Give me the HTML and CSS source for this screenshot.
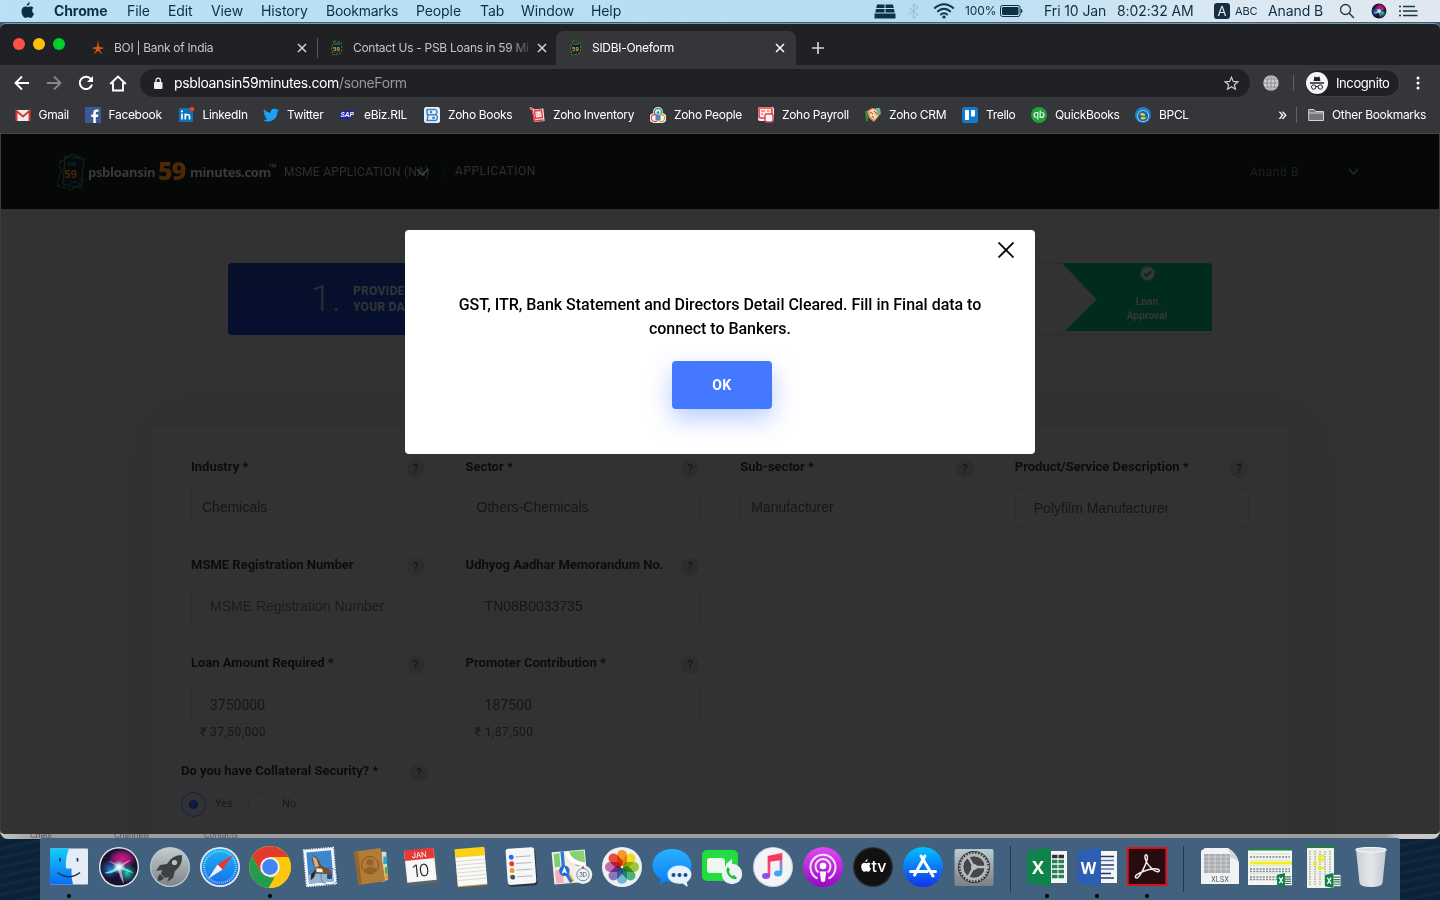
FILE: index.html
```html
<!DOCTYPE html>
<html lang="en">
<head>
<meta charset="utf-8">
<title>SIDBI-Oneform</title>
<link rel="stylesheet" href="styles.css">
</head>
<body>
<svg class="defs" width="0" height="0">
  <defs>
    <linearGradient id="gFinder" x1="0" y1="0" x2="0" y2="1"><stop offset="0" stop-color="#13cdf8"/><stop offset="1" stop-color="#0a6cf5"/></linearGradient>
    <linearGradient id="gSilver" x1="0" y1="0" x2="0" y2="1"><stop offset="0" stop-color="#c3cdd0"/><stop offset="1" stop-color="#7c8488"/></linearGradient>
    <linearGradient id="gSafari" x1="0" y1="0" x2="0" y2="1"><stop offset="0" stop-color="#19b2f5"/><stop offset="1" stop-color="#1b6fe6"/></linearGradient>
    <linearGradient id="gMsg" x1="0" y1="0" x2="0" y2="1"><stop offset="0" stop-color="#29b2fd"/><stop offset="1" stop-color="#0a7cf8"/></linearGradient>
    <linearGradient id="gPod" x1="0" y1="0" x2="0" y2="1"><stop offset="0" stop-color="#de4bf4"/><stop offset="1" stop-color="#9a06c4"/></linearGradient>
    <linearGradient id="gStore" x1="0" y1="0" x2="0" y2="1"><stop offset="0" stop-color="#02c2ff"/><stop offset="1" stop-color="#1432ec"/></linearGradient>
    <linearGradient id="gNote" x1="0" y1="0" x2="1" y2="1"><stop offset="0" stop-color="#ff2d55"/><stop offset=".5" stop-color="#f0518f"/><stop offset="1" stop-color="#36b5fb"/></linearGradient>
    <linearGradient id="gTrash" x1="0" y1="0" x2="1" y2="0"><stop offset="0" stop-color="#d3d6d9"/><stop offset=".5" stop-color="#eff0f1"/><stop offset="1" stop-color="#cbcfd2"/></linearGradient>
    <linearGradient id="gPref" x1="0" y1="0" x2="0" y2="1"><stop offset="0" stop-color="#b9ccd5"/><stop offset="1" stop-color="#7e7f81"/></linearGradient>
    <radialGradient id="gSiriTop"><stop offset="0" stop-color="#d81b86"/><stop offset=".6" stop-color="#a31878" stop-opacity=".8"/><stop offset="1" stop-color="#a31878" stop-opacity="0"/></radialGradient>
    <radialGradient id="gSiriBlue"><stop offset="0" stop-color="#2b7fd6"/><stop offset="1" stop-color="#2b4fb6" stop-opacity="0"/></radialGradient>
    <radialGradient id="gSiriTeal"><stop offset="0" stop-color="#28d3b7"/><stop offset="1" stop-color="#15917f" stop-opacity="0"/></radialGradient>
    <radialGradient id="gSiriCore"><stop offset="0" stop-color="#fff"/><stop offset=".35" stop-color="#d8fbff" stop-opacity=".85"/><stop offset="1" stop-color="#8fe7f5" stop-opacity="0"/></radialGradient>
    <symbol id="siri" viewBox="0 0 40 40"><circle cx="20" cy="20" r="20" fill="#e9e9ee"/><circle cx="20" cy="20" r="18.600" fill="#17132f"/><ellipse cx="23" cy="12" rx="14" ry="10" fill="url(#gSiriTop)"/><circle cx="11" cy="22" r="10" fill="url(#gSiriBlue)"/><circle cx="28" cy="26" r="10" fill="url(#gSiriTeal)"/><path d="M5 26Q12 24 20 18.500Q29 22 35 26Q27 25 21 21Q14 28 5 26Z" fill="#6fe9e3" opacity=".9"/><path d="M9 14Q16 15 20 20Q26 14 32 13Q25 17 21.500 21Q24 29 25 37Q20 29 19.500 22Q17 17 9 14Z" fill="#f39ad8" opacity=".85"/><circle cx="20" cy="20" r="7" fill="url(#gSiriCore)"/></symbol>
    <symbol id="psb" viewBox="0 0 16 16"><path d="M5 1L12 2.500L13 9L11.500 13.500L4 15L2.500 9L4 4Z" fill="#131a33" stroke="#477d2e" stroke-width="1" stroke-dasharray="2.500 1"/><path d="M5 4H11" stroke="#16803b" stroke-width="1.600"/><text x="4" y="10.500" class="psb-no">59</text><path d="M4 12H11" stroke="#243c92"/></symbol>
    <symbol id="x" viewBox="0 0 10 10"><path d="M1 1L9 9M9 1L1 9" stroke="currentColor" stroke-width="1.500"/></symbol>
    <symbol id="apple" viewBox="0 0 16 18"><path d="M11.200 0C11.300 2 9.700 4 7.800 4C7.600 2 9.400 .2 11.200 0ZM13.900 9.600C13.900 7.600 15.400 6.700 15.500 6.500C14.500 5.100 13 4.900 12.500 4.900C11.200 4.700 9.900 5.700 9.200 5.700C8.500 5.700 7.500 4.900 6.300 4.900C4.700 5 3.300 5.900 2.500 7.300C.9 10.200 2.100 14.400 3.700 16.500C4.500 17.600 5.300 18 6.300 18C7.400 18 7.900 17.300 9.200 17.300C10.500 17.300 10.900 18 12.100 18C13.200 18 14 16.900 14.700 15.800C15.600 14.500 15.900 13.300 16 13.200C15.900 13.200 13.900 12.400 13.900 9.600Z" fill="currentColor"/></symbol>
    <symbol id="xl" viewBox="0 0 17 16"><rect x="7" y="2" width="9.500" height="12" fill="#eef5f0"/><path d="M9 4.500H16M9 7H16M9 9.500H16M9 12H16" stroke="#47785d" stroke-width="1.300"/><path d="M0 2L9 0V16L0 14Z" fill="#0c8149"/><path d="M2.500 5L6.500 11.500M6.500 5L2.500 11.500" stroke="#fff" stroke-width="1.400"/></symbol>
  </defs>
</svg>

<div class="desktop">
  <header class="menubar">
    <nav class="menus">
      <svg width="14" height="16" class="apple"><use href="#apple"/></svg>
      <b>Chrome</b><span>File</span><span>Edit</span><span>View</span><span>History</span><span>Bookmarks</span><span>People</span><span>Tab</span><span>Window</span><span>Help</span>
    </nav>
    <div class="status">
      <svg width="22" height="15" viewBox="0 0 22 15"><path d="M3 .5H10.500V4H2.200ZM11.500 .5H19L19.800 4H11.500ZM2 5H10.500V8.500H1.200ZM11.500 5H20L20.800 8.500H11.500ZM.5 9.500H21.500V14.500H.5Z" fill="#0d3148"/></svg>
      <svg width="12" height="16" viewBox="0 0 12 16"><path d="M1 4.500L10 11.500L5.500 15.200V.8L10 4.500L1 11.500" fill="none" stroke="#9fc4da" stroke-width="1.200"/></svg>
      <svg width="22" height="16" viewBox="0 0 22 16"><g fill="none" stroke="#0d3148" stroke-width="1.900"><path d="M1.200 5.500Q11-3 20.800 5.500"/><path d="M4.300 8.800Q11 2.800 17.700 8.800"/><path d="M7.300 12Q11 8.500 14.700 12"/></g><circle cx="11" cy="14" r="1.600" fill="#0d3148"/></svg>
      <span class="pct">100%</span>
      <svg width="24" height="12" viewBox="0 0 24 12"><rect x=".5" y=".5" width="19.500" height="11" rx="2" fill="none" stroke="#0d3148"/><rect x="2" y="2" width="16.500" height="8" rx="1" fill="#0d3148"/><path d="M21.300 4Q23 6 21.300 8Z" fill="#0d3148" stroke="#0d3148" stroke-width=".8"/></svg>
      <span>Fri 10 Jan</span><span>8:02:32 AM</span>
      <i class="input-src">A</i><span class="abc">ABC</span><span class="user">Anand B</span>
      <svg width="16" height="16" viewBox="0 0 16 16"><circle cx="6.500" cy="6.500" r="5" fill="none" stroke="#223a49" stroke-width="1.300"/><path d="M10.200 10.200L15 15" stroke="#223a49" stroke-width="1.500"/></svg>
      <svg width="16" height="16"><use href="#siri"/></svg>
      <svg width="19" height="12" viewBox="0 0 19 12"><path d="M0 1.500H2M0 6H2M0 10.500H2M4 1.500H16M4 6H18.500M4 10.500H18.500" stroke="#1c3443" stroke-width="1.600"/></svg>
    </div>
  </header>

  <main class="window">
    <div class="tabstrip">
      <div class="lights"><i class="red"></i><i class="yellow"></i><i class="green"></i></div>
      <div class="tab tab-boi">
        <svg width="14" height="16" viewBox="0 0 14 16"><path d="M7 0L8 6.800L13.500 8L8.600 9.400L11.500 14.500L7 10.800L2.500 14.500L5.400 9.400L.5 8L6 6.800Z" fill="#e65214"/></svg>
        <span>BOI | Bank of India</span><svg width="10" height="10" class="close"><use href="#x"/></svg>
      </div>
      <div class="tab tab-contact">
        <svg width="16" height="16"><use href="#psb"/></svg>
        <span class="fade">Contact Us - PSB Loans in 59 Mi</span><svg width="10" height="10" class="close"><use href="#x"/></svg>
      </div>
      <div class="tab tab-active">
        <svg width="16" height="16"><use href="#psb"/></svg>
        <span>SIDBI-Oneform</span><svg width="10" height="10" class="close"><use href="#x"/></svg>
      </div>
      <svg class="plus" width="12" height="12" viewBox="0 0 12 12"><path d="M6 0V12M0 6H12" stroke="#d2d4d7" stroke-width="1.700"/></svg>
    </div>

    <div class="toolbar">
      <svg width="16" height="16" viewBox="0 0 16 16"><path d="M15 8H2M8 1.500L1.500 8L8 14.500" fill="none" stroke="#fff" stroke-width="1.900"/></svg>
      <svg width="16" height="16" viewBox="0 0 16 16"><path d="M1 8H14M8 1.500L14.500 8L8 14.500" fill="none" stroke="#85868a" stroke-width="1.800"/></svg>
      <svg width="16" height="16" viewBox="0 0 16 16"><path d="M13 4.200A6.200 6.200 0 1 0 14 9.500" fill="none" stroke="#fff" stroke-width="2"/><path d="M15 1V7H9Z" fill="#fff"/></svg>
      <svg class="home" width="18" height="17" viewBox="0 0 18 17"><path d="M1.200 9L9 1.500L16.800 9M4 7.500V15.500H14V7.500" fill="none" stroke="#fff" stroke-width="1.900"/></svg>
      <div class="omnibox">
        <svg width="10" height="13" viewBox="0 0 10 13"><rect x="1" y="5" width="8.500" height="7" rx="1" fill="#eee"/><path d="M3 5V3.300a2.200 2.200 0 0 1 4.400 0V5" fill="none" stroke="#eee" stroke-width="1.300"/></svg>
        <p class="url">psbloansin59minutes.com<span>/soneForm</span></p>
        <svg class="star" width="15" height="14" viewBox="0 0 16 15"><path d="M8 1.200L9.900 5.800L14.900 6.200L11.100 9.400L12.300 14.200L8 11.600L3.700 14.200L4.900 9.400L1.100 6.200L6.100 5.800Z" fill="none" stroke="#c8cacd" stroke-width="1.300"/></svg>
      </div>
      <svg class="globe" width="16" height="16" viewBox="0 0 16 16"><circle cx="8" cy="8" r="7.700" fill="#cbcbcb"/><path d="M8 0V16M0 8H16M1.800 4H14.200M1.800 12H14.200" stroke="#7c7d80" stroke-width=".7"/><ellipse cx="8" cy="8" rx="3.800" ry="7.700" fill="none" stroke="#7c7d80" stroke-width=".7"/></svg>
      <i class="sep"></i>
      <div class="incog">
        <svg width="22" height="22" viewBox="0 0 22 22"><circle cx="11" cy="11" r="11" fill="#f4f5f6"/><path d="M7.500 9L8.500 4.500L11 5.200L13.500 4.500L14.500 9Z" fill="#202124"/><path d="M4 11H18" stroke="#202124" stroke-width="1.400"/><circle cx="7.700" cy="15" r="2.200" fill="none" stroke="#202124"/><circle cx="14.300" cy="15" r="2.200" fill="none" stroke="#202124"/><path d="M10 14.700Q11 14 12 14.700" fill="none" stroke="#202124"/></svg>
        <span>Incognito</span>
      </div>
      <svg class="dots" width="4" height="14" viewBox="0 0 4 14"><g fill="#fff"><circle cx="2" cy="2" r="1.500"/><circle cx="2" cy="7" r="1.500"/><circle cx="2" cy="12" r="1.500"/></g></svg>
    </div>

    <div class="bookmarks">
      <div class="marks">
        <span><svg viewBox="0 0 16 16"><rect x="1" y="3" width="14" height="11" fill="#eee"/><path d="M1.500 14V4L8 9.500L14.500 4V14" fill="none" stroke="#d93a2f" stroke-width="2"/></svg>Gmail</span>
        <span><svg viewBox="0 0 16 16"><rect width="16" height="16" fill="#3c5a9a"/><path d="M10.800 16V10H13L13.400 7.500H10.800V6Q10.800 4.800 12 4.800H13.500V2.500H11.500Q8.300 2.500 8.300 5.800V7.500H6.300V10H8.300V16Z" fill="#fff"/></svg>Facebook</span>
        <span><svg viewBox="0 0 16 16"><rect y="1" width="14" height="14" rx="1" fill="#0a72b5"/><path d="M3 6.500V12.500M6.300 12.500V6.500M6.300 9Q7 7.300 8.700 7.500Q10.500 7.700 10.500 9.500V12.500" fill="none" stroke="#fff" stroke-width="1.700"/><circle cx="3" cy="4.300" r="1.100" fill="#fff"/><circle cx="13" cy="2" r="2.300" fill="#f03d25"/></svg>LinkedIn</span>
        <span><svg viewBox="0 0 24 24"><path d="M24 4.600a10 10 0 0 1-2.800.8 5 5 0 0 0 2.100-2.700 10 10 0 0 1-3.100 1.200 4.900 4.900 0 0 0-8.400 4.500A14 14 0 0 1 1.700 3.200a4.900 4.900 0 0 0 1.500 6.500 4.900 4.900 0 0 1-2.200-.6 4.900 4.900 0 0 0 3.900 4.900 5 5 0 0 1-2.200.1 4.900 4.900 0 0 0 4.600 3.400A10 10 0 0 1 0 19.500 14 14 0 0 0 21.500 7.100 10 10 0 0 0 24 4.600Z" fill="#1da1f2"/></svg>Twitter</span>
        <span><svg viewBox="0 0 16 16"><path d="M0 4H16L9 12H0Z" fill="#1c20a8"/><text x=".5" y="10.300" class="sap">SAP</text></svg>eBiz.RIL</span>
        <span><svg viewBox="0 0 16 16"><rect width="16" height="16" rx="2.500" fill="#e9f1f8"/><path d="M3 2.500H11.500Q14.500 5 11.500 7.500Q15 10 12 13.500H3Q4.500 10 3.500 8Q2.500 5 3 2.500ZM4 7.800H11.500" fill="none" stroke="#3b83c4" stroke-width="1.500"/><circle cx="7" cy="5" r="1.300" fill="#3b83c4"/><circle cx="9.500" cy="10.800" r="1.400" fill="#3b83c4"/></svg>Zoho Books</span>
        <span><svg viewBox="0 0 16 16"><path d="M1 1L4 2.500L6 14L14.500 13L13.500 2.500L5 3.500Z" fill="#fbd9da" stroke="#fbd9da" stroke-width="2"/><path d="M.5 1L3 2L5.500 14L14.500 13M5.500 4L12.500 3L13.500 10.500L6.500 11.500Z" fill="none" stroke="#e43c4a" stroke-width="1.300"/><rect x="8" y="4.500" width="3" height="3" fill="#fff3e5" stroke="#e88b8f" stroke-width=".5"/></svg>Zoho Inventory</span>
        <span><svg viewBox="0 0 16 16"><path d="M8 0A4.500 4.500 0 0 1 12.500 6A5 5 0 0 1 11 16H5A5 5 0 0 1 3.500 6A4.500 4.500 0 0 1 8 0Z" fill="#f2f6f6"/><circle cx="8" cy="5" r="3.500" fill="none" stroke="#329a69" stroke-width="1.300"/><circle cx="4.800" cy="11" r="3.500" fill="none" stroke="#e34f4e" stroke-width="1.300"/><circle cx="11.200" cy="11" r="3.500" fill="none" stroke="#dd9c3e" stroke-width="1.300"/><path d="M5.500 13V9Q8 6.500 10.500 9V13Z" fill="#438bc0"/><circle cx="8" cy="5.500" r="1.500" fill="#438bc0"/></svg>Zoho People</span>
        <span><svg viewBox="0 0 16 16"><rect width="16" height="14" rx="2" fill="#ffe9e9"/><rect x="1" y="1" width="13" height="10" rx="1.500" fill="none" stroke="#e53c49" stroke-width="1.600"/><rect x="7" y="7" width="8" height="8" rx="2" fill="#fff" stroke="#e53c49" stroke-width="1.500"/><path d="M3 4H7M3 7H5" stroke="#e53c49"/><rect x="9" y="3" width="3" height="2" fill="#f6b34c"/></svg>Zoho Payroll</span>
        <span><svg viewBox="0 0 16 16"><path d="M0 4H3V14H1Z" fill="#2f8c3a"/><path d="M11 1H15L16 7L13 9Z" fill="#43b6dd"/><path d="M2 4L7 1L13 2L14 9L9 15L4 11Z" fill="#d99154"/><path d="M4 4L8 2L12 4L10 7L13 9L9 13L5 9Z" fill="#f5d8ba"/><path d="M5 5L8 7M7 9L9 11M9 4L11 6" stroke="#8c4d20"/></svg>Zoho CRM</span>
        <span><svg viewBox="0 0 16 16"><rect width="16" height="16" rx="2.500" fill="#117bd1"/><rect x="3" y="3" width="4" height="10" rx=".7" fill="#fff"/><rect x="9" y="3" width="4" height="6.500" rx=".7" fill="#fff"/></svg>Trello</span>
        <span><svg viewBox="0 0 16 16"><circle cx="8" cy="8" r="8" fill="#20a13a"/><g fill="none" stroke="#e6f6e9" stroke-width="1.200"><path d="M6.800 12.500V5.500H5.500a2.400 2.400 0 0 0 0 4.800M9.200 3.500V10.300h1.300a2.400 2.400 0 0 0 0-4.800"/></g></svg>QuickBooks</span>
        <span><svg viewBox="0 0 16 16"><circle cx="8" cy="8" r="8" fill="#1b82c9"/><circle cx="8" cy="9" r="6" fill="#a9d4e8"/><circle cx="8" cy="9" r="5.200" fill="#1767b4"/><path d="M4.500 8Q6 5 9 6.500Q11 8 9 9.500Q8 7.500 4.500 8ZM11.500 10Q10 13 7 12.500Q4.500 11 7 9.500Q8 11 11.500 10Z" fill="#f5d917"/></svg>BPCL</span>
      </div>
      <span class="more">»</span><i class="sep"></i>
      <svg class="folder" width="17" height="14" viewBox="0 0 17 14"><path d="M.7 12.500V1.500H6L7.500 3.500H15.500V12.500Z" fill="#747578" stroke="#d4d5d6"/><path d="M.7 5H15.500" stroke="#d4d5d6"/></svg>
      <span class="other">Other Bookmarks</span>
    </div>

    <section class="page">
      <div class="site-head">
        <svg class="logo" width="31" height="38" viewBox="0 0 31 38"><g fill="none" stroke="#12260f" stroke-width="1.200"><path d="M9 3L28 6L25 35L7 31Z" fill="#060a0c"/><path d="M5 9L16 1L27 6"/><path d="M5 7L3 14L6 17L3 24L1 32L14 37L22 33L28 26" stroke-dasharray="4 1.500"/></g><text x="12" y="13" class="l-psb">PSB</text><text x="8.500" y="25" class="l-59">59</text><path d="M15 29H21" stroke="#121b38"/></svg>
        <span class="brand b1">psbloansin</span><span class="brand num">59</span><span class="brand b2">minutes.com</span><span class="tm">™</span>
        <span class="nav nav-msme">MSME APPLICATION (NA)<svg width="15" height="10" viewBox="0 0 15 10"><path d="M2 2L7.500 8L13 2" fill="none" stroke="#42494b" stroke-width="1.500"/></svg></span>
        <span class="nav nav-app">APPLICATION</span>
        <span class="nav nav-user">Anand B</span>
        <svg class="chev" width="11" height="8" viewBox="0 0 11 8"><path d="M1 1L5.500 6L10 1" fill="none" stroke="#282b38" stroke-width="1.400"/></svg>
      </div>
      <div class="steps">
        <div class="step1"><b class="n">1.</b><span>PROVIDE<br>YOUR DATA</span></div>
        <div class="step2"><svg width="157" height="72" viewBox="0 0 157 72"><path d="M-60 0H7L42 36L10 68M-60 71.500H5L11 68" fill="none" stroke="#2c2c2c"/><path d="M7 0H153Q157 0 157 4V68H10L42 36.500Z" fill="#002b1e"/><path d="M157 68Q157 71.500 153 71.500H5" fill="none" stroke="#2c2c2c"/></svg>
          <div class="approval"><svg width="15" height="15" viewBox="0 0 15 15"><circle cx="7.500" cy="7.500" r="6.600" fill="#353635" stroke="#353635" stroke-dasharray="1.600 1" stroke-width="1.400"/><path d="M4.200 7.800L6.500 10L11 5.200" fill="none" stroke="#002b1e" stroke-width="1.900"/></svg><span>Loan<br>Approval</span></div>
        </div>
      </div>
      <div class="card">
        <div class="fields">
          <div class="field"><label>Industry *<i>?</i></label><div class="select">Chemicals</div></div>
          <div class="field"><label>Sector *<i>?</i></label><div class="select">Others-Chemicals</div></div>
          <div class="field"><label>Sub-sector *<i>?</i></label><div class="select">Manufacturer</div></div>
          <div class="field"><label>Product/Service Description *<i>?</i></label><div class="input">Polyfilm Manufacturer</div></div>
          <div class="field"><label>MSME Registration Number<i>?</i></label><div class="input ph">MSME Registration Number</div></div>
          <div class="field"><label>Udhyog Aadhar Memorandum No.<i>?</i></label><div class="input">TN08B0033735</div></div>
          <div class="field first"><label>Loan Amount Required *<i>?</i></label><div class="input rob">3750000</div><small>₹ 37,50,000</small></div>
          <div class="field"><label>Promoter Contribution *<i>?</i></label><div class="input rob">187500</div><small>₹ 1,87,500</small></div>
        </div>
        <div class="collateral">
          <label>Do you have Collateral Security? *<i>?</i></label>
          <div class="radios"><u class="on"></u><span>Yes</span><u></u><span>No</span></div>
        </div>
      </div>
      <div class="modal">
        <svg class="m-close" width="16" height="16" viewBox="0 0 16 16"><path d="M.5 .5L15.500 15.500M15.500 .5L.5 15.500" stroke="#000" stroke-width="1.800"/></svg>
        <p>GST, ITR, Bank Statement and Directors Detail Cleared. Fill in Final data to connect to Bankers.</p>
        <button>OK</button>
      </div>
    </section>
  </main>

  <div class="behind"><span>Chats</span><span>Channels</span><span>Contacts</span></div>

  <footer class="dockrow">
    <div class="dock">
      <div class="app run"><svg viewBox="0 0 40 40"><rect x="1" y="1.500" width="38" height="36" rx="1" fill="#e4ecf7"/><path d="M2 1.500H20Q16 11 17 21.500H22.500Q22 30 24 37.500H2Q1 37.500 1 36V2.500Z" fill="url(#gFinder)"/><path d="M11 11V14.500M28.500 11V14.500" stroke="#14334c" stroke-width="1.700"/><path d="M8.500 25.500Q20 34 31 25.500" fill="none" stroke="#14334c" stroke-width="1.500"/></svg></div>
      <div class="app"><svg viewBox="0 0 40 40"><use href="#siri"/></svg></div>
      <div class="app"><svg viewBox="0 0 40 40"><circle cx="20" cy="20" r="20" fill="#bfc7ca"/><circle cx="20" cy="20" r="18.700" fill="url(#gSilver)"/><path d="M32 8Q22 8 17 17L10 18L6 24L12 23L11 27L15 31L19 30L17 35L23 31L25 24Q33 18 32 8Z" fill="#3c4043"/><circle cx="24.500" cy="15.500" r="2.600" fill="#b8c2c5"/><path d="M10 27Q7 30 8 34Q12 34 14 31Z" fill="#3c4043"/></svg></div>
      <div class="app"><svg viewBox="0 0 40 40"><circle cx="20" cy="20" r="20" fill="#e8ebee"/><circle cx="20" cy="20" r="18.300" fill="url(#gSafari)"/><circle cx="20" cy="20" r="15.800" fill="none" stroke="#bfe4fb" stroke-width="2" stroke-dasharray=".7 1.400"/><path d="M33 8L22.500 22.500L17.500 17.500Z" fill="#f0332b"/><path d="M8 32L17.500 17.500L22.500 22.500Z" fill="#f1f2f3"/></svg></div>
      <div class="app run"><svg class="big" viewBox="0 0 42 42"><circle cx="21" cy="21" r="21" fill="#fbc711"/><path d="M3 10.500A21 21 0 0 1 39.300 11H21L12 26Z" fill="#e23a2d"/><path d="M3 10.500L12 26L21 31.500H25.500L19.500 42A21 21 0 0 1 3 10.500Z" fill="#229c4e"/><path d="M39.300 11A21 21 0 0 1 19.500 42L30 26L28 11Z" fill="#fbc711"/><circle cx="21" cy="21" r="9.800" fill="#f3f3f1"/><circle cx="21" cy="21" r="7.900" fill="#4484f0"/></svg></div>
      <div class="app"><svg viewBox="0 0 40 42"><g transform="rotate(-5 20 21)"><rect x="4.500" y="2" width="31" height="38" fill="#f5f7f8" stroke="#f5f7f8" stroke-width="2" stroke-dasharray="1.500 1"/><rect x="7" y="4.500" width="26" height="33" fill="#3f86cf"/><path d="M7 28H33V37.500H7Z" fill="#8db6d8"/><path d="M13 8Q17 9 19 13L22 20L29 24L33 30L26 29L20 28L15 27L10 34L11 28L15 22L12 14Z" fill="#75502e"/><path d="M13 9L17 12L19 20L15 21Z" fill="#c8b596"/><path d="M16 22L22 23L23 27L16 26Z" fill="#f4efe0"/><path d="M10 28L15 24L13 31L9 34Z" fill="#362617"/></g><circle cx="30" cy="31" r="9" fill="none" stroke="#33485e" opacity=".5"/><rect x="27.500" y="28.500" width="5" height="5" fill="#264b72"/></svg></div>
      <div class="app"><svg viewBox="0 0 40 42"><path d="M31 5L36 5L38 34L32 37Z" fill="#ded9ce"/><path d="M35 10V18" stroke="#24a8ce" stroke-width="4"/><path d="M36 21V28" stroke="#4fae46" stroke-width="3"/><path d="M36.500 28V34" stroke="#ef9329" stroke-width="3"/><path d="M2 5L30 1L35 36L7 40Z" fill="#b07c37"/><path d="M2 5L6 4.400L10.500 39.500L7 40Z" fill="#96652a"/><circle cx="19" cy="19" r="9" fill="none" stroke="#81561f"/><circle cx="19" cy="16" r="3.500" fill="#946228"/><path d="M12 25Q19 17 27 24Q20 31 12 25Z" fill="#946228"/></svg></div>
      <div class="app"><svg viewBox="0 0 40 42"><g transform="rotate(-6 20 21)"><path d="M3 6H37V40H3Z" fill="#59646b"/><path d="M4 3H35V36H4Z" fill="#f6f7f7"/><path d="M4 2H35V13H4Z" fill="#e53b36"/><text x="19.500" y="11" class="cal-m">JAN</text><text x="19.500" y="31" class="cal-d">10</text></g></svg></div>
      <div class="app"><svg viewBox="0 0 40 42"><g transform="rotate(-5 20 21)"><rect x="4.500" y="2" width="31" height="39" fill="#d9a720"/><rect x="4.500" y="2" width="31" height="38" fill="#f9f9f5"/><path d="M4.500 1H35.500V10H4.500Z" fill="#fbd016"/><path d="M5 14H35M5 18H35M5 22H35M5 26H35M5 30H35M5 34H35" stroke="#ccd0d2" stroke-width=".8"/></g></svg></div>
      <div class="app"><svg viewBox="0 0 40 42"><g transform="rotate(-4 20 21)"><rect x="6" y="3" width="30" height="38" rx="3" fill="#29313a"/><rect x="5" y="1" width="30" height="38" rx="3" fill="#f5f6f8"/><path d="M15 10H31M15 17H31M15 24H31M15 31H31" stroke="#a2a4a8" stroke-width=".8"/><circle cx="10.500" cy="10" r="2.600" fill="#2b6cf0"/><circle cx="10.500" cy="17" r="2.600" fill="#ea3c2c"/><circle cx="10.500" cy="24" r="2.600" fill="#f09a24"/><circle cx="10.500" cy="31" r="2.600" fill="#4a535c"/></g></svg></div>
      <div class="app"><svg viewBox="0 0 42 42"><g transform="rotate(-5 18 21)"><rect x="1" y="4" width="35" height="34" fill="#f2ede3"/><path d="M18 5H35V25L25 20Z" fill="#8ad075"/><path d="M17 5Q20 17 35 20" fill="none" stroke="#fff" stroke-width="4"/><path d="M3 6V20H9V6Z" fill="#7fcf6e"/><path d="M12 20L20 37" stroke="#f6c93a" stroke-width="5"/><path d="M3 23H11V37H3Z" fill="#f5aeb7"/><path d="M12 4V22L19 37" fill="none" stroke="#2e78dc" stroke-width="3.500"/></g><circle cx="13" cy="25" r="5.500" fill="#1e69d4"/><path d="M13 20.500L16 28L13 26.500L10 28Z" fill="#fff"/><circle cx="32.500" cy="29" r="9.800" fill="#edf1f3"/><circle cx="32.500" cy="29" r="6.500" fill="none" stroke="#69889b"/><text x="28.500" y="32" class="threed">3D</text><circle cx="32.500" cy="21.500" r="1.200" fill="#e5393c"/></svg></div>
      <div class="app"><svg viewBox="0 0 40 40"><circle cx="20" cy="20" r="20" fill="#eef0f2"/><g class="petals"><rect x="15" y="3" width="10" height="16" rx="5" fill="#f59a22"/><rect x="15" y="3" width="10" height="16" rx="5" fill="#efd928" transform="rotate(45 20 20)"/><rect x="15" y="3" width="10" height="16" rx="5" fill="#9bc832" transform="rotate(90 20 20)"/><rect x="15" y="3" width="10" height="16" rx="5" fill="#4fb178" transform="rotate(135 20 20)"/><rect x="15" y="3" width="10" height="16" rx="5" fill="#72b5df" transform="rotate(180 20 20)"/><rect x="15" y="3" width="10" height="16" rx="5" fill="#8777bb" transform="rotate(225 20 20)"/><rect x="15" y="3" width="10" height="16" rx="5" fill="#c46ab0" transform="rotate(270 20 20)"/><rect x="15" y="3" width="10" height="16" rx="5" fill="#e84d3d" transform="rotate(315 20 20)"/></g></svg></div>
      <div class="app"><svg viewBox="0 0 40 40"><path d="M20 2C31 2 39.500 9 39.500 18.500S31 35 20 35Q15 35 13 34Q11 37 7 38Q9 35 8.500 31.500Q.5 27 .5 18.500C.5 9 9 2 20 2Z" fill="url(#gMsg)"/><path d="M27.500 18.500C34.500 18.500 39.500 22.500 39.500 27.500Q39 32 35 35Q34.500 37 36 39.500Q33 39 31 36.500C22 38 15.500 33.500 15.500 27.500C15.500 22.500 20.500 18.500 27.500 18.500Z" fill="#e6f2fb"/><g fill="#174f8a"><circle cx="21.500" cy="28" r="2"/><circle cx="27.500" cy="28" r="2"/><circle cx="33.500" cy="28" r="2"/></g></svg></div>
      <div class="app"><svg viewBox="0 0 40 40"><rect y="3" width="36" height="31" rx="5" fill="#21dd40"/><rect x="5" y="11" width="18" height="15" rx="3" fill="#eef6ef"/><path d="M24 17L30 12V25L24 20Z" fill="#eef6ef"/><circle cx="30" cy="27" r="10.200" fill="#eff2f1"/><path d="M25 21Q23 25 28 30Q33 34 35 31L32 28L30 29Q27 27 27 24L28 23L26 20Z" fill="#1bbd3d"/></svg></div>
      <div class="app"><svg viewBox="0 0 40 40"><circle cx="20" cy="20" r="20" fill="#cfd5db"/><circle cx="20" cy="20" r="18.900" fill="#f2f4f6"/><path d="M16 29V10L28 7.500V26" fill="none" stroke="url(#gNote)" stroke-width="2.700"/><path d="M15 10L29 7V13L15 15Z" fill="#f7385f"/><ellipse cx="13" cy="29" rx="4" ry="3" fill="#8c50ee"/><ellipse cx="25" cy="26.500" rx="4" ry="3" fill="#3aa7f5"/></svg></div>
      <div class="app"><svg viewBox="0 0 40 40"><circle cx="20" cy="20" r="20" fill="url(#gPod)"/><g fill="none" stroke="#f6e6fa" stroke-width="2"><path d="M14.500 31.500A12.500 12.500 0 1 1 25.500 31.500"/><path d="M15.500 25.500A7.500 7.500 0 1 1 24.500 25.500"/></g><circle cx="20" cy="19" r="3.300" fill="#fff"/><path d="M16.800 24.500H23.200L22 34Q20 36 18 34Z" fill="#fff"/></svg></div>
      <div class="app"><svg viewBox="0 0 40 40"><circle cx="20" cy="20" r="20" fill="#303030"/><circle cx="20" cy="20" r="18.700" fill="#111"/><svg x="7" y="12" width="11" height="13" color="#fff"><use href="#apple"/></svg><text x="18.500" y="25" class="tv">tv</text></svg></div>
      <div class="app"><svg viewBox="0 0 40 40"><circle cx="20" cy="20" r="20" fill="url(#gStore)"/><path d="M22 9L11.500 28M18 9L30 29M7.500 24.500H24M28 24.500H32.500" stroke="#fff" stroke-width="3" stroke-linecap="round"/></svg></div>
      <div class="app"><svg viewBox="0 0 40 40"><rect x=".5" y="2" width="39" height="37" rx="2" fill="url(#gPref)"/><circle cx="20" cy="20" r="16" fill="#2b2e30"/><circle cx="20" cy="20" r="12" fill="none" stroke="#b4b6b6" stroke-width="3"/><circle cx="20" cy="20" r="14.200" fill="none" stroke="#b4b6b6" stroke-width="2" stroke-dasharray="1.600 1.400"/><circle cx="20" cy="20" r="10.300" fill="#43474a"/><path d="M20 20H32M20 20L14 9.500M20 20L14 30.500" stroke="#b9bbbc" stroke-width="2.500"/><circle cx="20" cy="20" r="3" fill="#b9bbbc"/></svg></div>
      <i class="divider"></i>
      <div class="app run"><svg viewBox="0 0 40 40"><rect x="22" y="4" width="18" height="32" fill="#f4f6f5"/><path d="M25 9.500H37" stroke="#2b3238" stroke-width="3.500"/><path d="M25 14.500H37M25 19.500H37M25 24.500H37M25 29.500H37" stroke="#288156" stroke-width="3.600"/><path d="M31 7V32" stroke="#f4f6f5"/><path d="M0 4L24 0V40L0 36Z" fill="#10834a"/><text x="11" y="27" class="office">X</text></svg></div>
      <div class="app run"><svg viewBox="0 0 40 40"><rect x="22" y="4" width="18" height="32" fill="#f4f6f8"/><path d="M24 9.500H37M24 18H37M24 26.500H34M24 31H37" stroke="#263b58" stroke-width="1.600"/><path d="M24 13.500H37M24 22H37" stroke="#4d7ac6" stroke-width="1.600"/><path d="M0 4L24 0V40L0 36Z" fill="#2e5eb3"/><text x="11.500" y="26.500" class="office w">W</text></svg></div>
      <div class="app run"><svg viewBox="0 0 40 40"><rect x=".8" y="1" width="38.400" height="37" fill="#270b10" stroke="#eb0c12" stroke-width="1.800"/><path d="M9 31C6 29 13 25 22 22.500C31 20.500 34 23 31.500 24.500C28 26 19 17 18 11C17.500 6 21.500 7 20 13C18.500 19 12 32 9 31Z" fill="none" stroke="#f0eeee" stroke-width="1.500"/></svg></div>
      <i class="divider"></i>
      <div class="app"><svg viewBox="0 0 40 40"><path d="M1 4L5 1H28Q37 7 39 16V37H1Z" fill="#f1f2f3"/><path d="M4 7H30V26H4Z" fill="#a9acb0"/><path d="M4 10H30M4 14H30M4 18H30M4 22H30M9 7V26M15 7V26M21 7V26M26 7V26" stroke="#e8e9ea" stroke-width=".6"/><path d="M28 1Q32 8 30 11Q36 11 39 16Q37 6 28 1Z" fill="#d3d5d8"/><text x="20" y="35" class="xlsx">XLSX</text></svg></div>
      <div class="app"><svg class="wide" viewBox="0 0 44 40"><rect x="0" y="1" width="44" height="37" fill="#f3f6f2"/><rect x="0" y="1" width="44" height="2.500" fill="#1e7c49"/><rect x="2" y="14.500" width="42" height="3" fill="#f2ef1a"/><g stroke="#7d8289" stroke-dasharray="2 1.200"><path d="M2 10H42M2 22H42M2 24.500H42M2 30H30M2 32.500H30" stroke-width="1.500"/></g><path d="M2 7H42M2 13H42M2 19H42M2 27H42" stroke="#cfd4ce" stroke-width=".6"/><svg x="28" y="26" width="17" height="14"><use href="#xl"/></svg></svg></div>
      <div class="app"><svg viewBox="0 0 38 44" class="tall"><rect x="5" y="1" width="27" height="42" fill="#eef2e8"/><rect x="5" y="1" width="27" height="2" fill="#1e7c49"/><path d="M8 6V41M13 6V41M18 6V41M23 6V41M28 6V41" stroke="#a7b0a0" stroke-dasharray="1.500 1" stroke-width="1.400"/><path d="M16 11H22M16 15H22M11 19H15M16 23H22" stroke="#efec2a" stroke-width="3"/><svg x="23" y="28" width="16" height="15"><use href="#xl"/></svg></svg></div>
      <div class="app"><svg viewBox="0 0 40 40"><path d="M5 2.500L8.500 36Q9.500 40 20 40T31.500 36L35 2.500Z" fill="url(#gTrash)" opacity=".94"/><ellipse cx="20" cy="2.800" rx="15.500" ry="2.400" fill="#dcdfe1" stroke="#f7f7f7"/></svg></div>
    </div>
  </footer>
</div>
</body>
</html>
```
FILE: styles.css
```css
* { box-sizing: border-box; }
body { margin: 0; font-family: Inter, "Liberation Sans", sans-serif; }
p { margin: 0; }
i, u { font-style: normal; text-decoration: none; }
svg { display: block; flex: none; }
.defs { position: absolute; }

.desktop { width: 1440px; height: 900px; overflow: hidden; display: flex; flex-direction: column; background: repeating-linear-gradient(168deg, #0000 0, #ffffff0a 2px, #0000 5px, #0000 9px), linear-gradient(#2d5f85 0, #2d5f85 30px, #0b2740 40px, #0a2137 100%); }

/* menu bar */
.menubar { height: 22px; flex: none; display: flex; justify-content: space-between; align-items: center; background: linear-gradient(90deg, #b9e0f4 0, #b6ddf2 65%, #dae8f1 85%, #dfe8f0); color: #0c2f45; font-size: 14px; letter-spacing: -.1px; }
.menus { display: grid; grid-template-columns: 33px 73px 41px 43px 50px 65px 90px 64px 41px 70px 50px; padding-left: 21px; align-items: center; }
.menus span, .menus b { white-space: nowrap; margin-top: -1px; }
.menus span:nth-of-type(5) { letter-spacing: -.25px; }
.menus .apple { margin: -3px 0 0 -1px; }
.status { display: grid; grid-template-columns: 34px 25px 32px 35px 44px 73px 97px 21px 33px 71px 32px 28px 19px; padding-right: 22px; align-items: center; white-space: nowrap; }
.status span { margin-top: -1px; }
.status .pct { font-size: 12px; }
.status .abc { font-size: 11px; }
.status .user { letter-spacing: -.1px; }
.input-src { width: 16px; height: 16px; border-radius: 3px; background: #16303f; color: #dcebf3; font-size: 13px; line-height: 16px; text-align: center; }

/* browser window */
.window { height: 811px; margin-top: 1px; flex: none; display: flex; flex-direction: column; border-top: 1px solid #8e9599; border-radius: 6px 6px 5px 5px; overflow: hidden; position: relative; z-index: 1; background: #202124; color: #fff; }
.tabstrip { height: 41px; flex: none; display: flex; align-items: flex-end; }
.lights { display: flex; gap: 8px; width: 77px; padding-left: 13px; align-self: center; margin-top: -1px; }
.lights i { width: 12px; height: 12px; border-radius: 50%; }
.red { background: #ff4f47; } .yellow { background: #ffbd03; } .green { background: #00cf2b; }
.tab { height: 34px; display: flex; align-items: center; font-size: 12px; letter-spacing: -.3px; color: #c3c5c9; }
.tab span { margin-top: -1px; }
.tab .close { margin-left: auto; color: #d3d5d8; }
.tab-boi { width: 241px; padding: 0 11px 0 14px; gap: 9px; background: linear-gradient(#5a5c60, #5a5c60) right center / 1px 20px no-repeat; }
.tab-contact { width: 238px; padding: 0 10px 0 11px; gap: 8px; }
.fade { width: 176px; white-space: nowrap; -webkit-mask-image: linear-gradient(90deg, #000 88%, #0003); mask-image: linear-gradient(90deg, #000 88%, #0003); }
.tab-active { width: 240px; padding: 0 11px 0 12px; gap: 8px; background: #35363a; border-radius: 8px 8px 0 0; color: #fff; }
.tab-active .close { color: #fff; }
.plus { margin: 0 0 11px 16px; }
.psb-no { font: 700 6px "Open Sans", sans-serif; fill: #f49c16; letter-spacing: 0; }

.toolbar { height: 36px; flex: none; display: flex; align-items: center; padding-left: 14px; gap: 16px; background: #35363a; }
.home { margin: 0 1px 0 -1px; }
.omnibox { width: 1110px; height: 28px; margin-left: -4px; border-radius: 14px; background: #202124; display: flex; align-items: center; padding: 0 11px 0 13px; }
.url { margin: -1px 0 0 11px; font-size: 14px; letter-spacing: -.38px; }
.url span { color: #96989c; }
.star { margin-left: auto; }
.globe { margin-left: -3px; }
.sep { width: 1px; height: 16px; background: #606165; margin-left: -2px; }
.incog { width: 96px; height: 28px; margin-left: -6px; border: 1px solid #404145; border-radius: 14px; background: #202124; display: flex; align-items: center; gap: 8px; padding-left: 1px; font-size: 13px; letter-spacing: -.4px; }

.bookmarks { height: 33px; flex: none; display: flex; align-items: center; background: #35363a; font-size: 12px; letter-spacing: -.32px; white-space: nowrap; border-bottom: 1px solid #46474a; padding-bottom: 5px; }
.marks { display: grid; grid-template-columns: 70px 94px 84px 77px 84px 105px 121px 108px 107px 97px 69px 104px 60px; padding-left: 15px; width: 1278px; }
.marks span { display: flex; align-items: center; gap: 8px; }
.marks span:nth-child(-n+3) { gap: 7.500px; }
.marks svg { width: 16px; height: 16px; }
.sap { font: italic 700 6.500px "Liberation Sans", sans-serif; fill: #fff; letter-spacing: 0; }
.more { font-size: 16px; width: 20px; line-height: 16px; margin-top: -2px; }
.folder { margin: 0 7px 0 11px; }

/* web page */
.page { flex: 1; background: #323232; box-shadow: inset -1px 0 #3f3f3f, inset 1px 0 #3c3c3c; position: relative; color: #111; font-family: Roboto, sans-serif; overflow: hidden; }
.site-head { height: 75px; margin: 0 1px; display: flex; align-items: center; padding-left: 55px; background: #060808; white-space: nowrap; }
.l-psb { font: 700 4.500px "Open Sans", sans-serif; fill: #0a3519; }
.l-59 { font: 700 11px "Open Sans", sans-serif; fill: #472903; }
.brand { font-family: "Open Sans", sans-serif; font-weight: 700; font-size: 13px; color: #383a3c; }
.b1 { width: 70px; margin: 1px 0 0 1px; letter-spacing: -.3px; }
.num { font-size: 25px; font-weight: 800; width: 32px; color: #4a2904; margin-top: -4px; letter-spacing: -1px; }
.b2 { width: 79px; margin-top: 1px; letter-spacing: -.36px; }
.tm { font: 700 10px "Open Sans", sans-serif; color: #383a3c; width: 15px; margin-top: -9px; }
.nav { font-size: 12px; color: #2e3030; letter-spacing: .25px; }
.nav-msme { display: flex; align-items: center; width: 161px; border-right: 1px solid #0d1010; }
.nav-msme svg { margin-left: -15px; }
.nav-app { margin-left: 10px; margin-top: -2px; width: 795px; letter-spacing: .55px; }
.nav-user { width: 98px; color: #1c1e28; letter-spacing: .6px; }

.steps { display: flex; justify-content: space-between; width: 984px; height: 72px; margin: 54px 0 0 228px; }
.step1 { width: 300px; border-radius: 4px; background: linear-gradient(#07102a, #06102f); display: flex; align-items: center; padding-left: 83px; font-size: 12px; font-weight: 700; line-height: 16px; color: #333536; letter-spacing: .3px; }
.step1 .n { font-size: 36px; font-weight: 300; width: 42px; line-height: 40px; letter-spacing: 1px; color: #2a2d35; }
.step2 { display: grid; width: 157px; }
.step2 > svg { overflow: visible; }
.step2 > * { grid-area: 1 / 1; }
.approval { display: flex; flex-direction: column; align-items: center; padding: 3px 0 0 27px; gap: 14px; font-size: 10px; font-weight: 700; line-height: 14px; text-align: center; letter-spacing: .1px; color: #363636; }

.card { width: 1140px; height: 440px; margin: 89px 0 0 150px; border: 1px solid #2d2d2d; border-radius: 4px; padding: 35px 0 0 40px; box-shadow: 12px 0 50px rgba(0, 0, 0, .05); }
.fields { display: grid; grid-template-columns: repeat(4, 234.600px); column-gap: 40px; grid-auto-rows: 98px; }
.first { grid-column: 1; }
label { display: flex; justify-content: space-between; height: 28px; padding-right: 1px; font-size: 13px; font-weight: 700; line-height: 14px; color: #0c0c0c; white-space: nowrap; }
label i { width: 18px; height: 18px; border-radius: 50%; background: #2d2d2d; color: #181818; font-size: 12px; font-weight: 500; line-height: 18px; text-align: center; }
.select, .input { border: 1px solid #2e2e2e; font-family: "Liberation Sans", sans-serif; font-size: 14px; color: #161616; }
.select { height: 38px; line-height: 37px; padding-left: 10px; }
.input { height: 40px; line-height: 39px; padding-left: 18px; border-radius: 3px; }
.input.ph { color: #1c1c1c; }
.input.rob { font-family: Roboto, sans-serif; line-height: 40px; }
small { display: block; font-size: 12px; line-height: 16px; padding-left: 9px; letter-spacing: .45px; color: #161616; }
.collateral { width: 248px; margin: 10px 0 0 -10px; }
.radios { display: flex; font-size: 11px; color: #181818; letter-spacing: .1px; line-height: 24px; }
.radios u { width: 25px; height: 25px; border: 1px solid #2e2e2e; border-radius: 50%; margin-right: 9px; }
.radios span { width: 33px; }
.radios .on { border-color: #11224f; background: radial-gradient(circle, #0d1a40 4.500px, transparent 5px); }

.modal { position: absolute; left: 405px; top: 96px; width: 630px; height: 224px; border-radius: 4px; background: #fff; display: flex; flex-direction: column; align-items: center; }
.m-close { margin: 12px 21px 0 0; align-self: flex-end; }
.modal p { width: 550px; margin-top: 35px; font-size: 16px; font-weight: 500; line-height: 24px; text-align: center; color: #000; letter-spacing: -.02px; }
.modal button { width: 100px; height: 48px; margin: 20px 0 0 4px; border: 0; border-radius: 4px; background: #4478ff; color: #fff; font: 700 14px Roboto, sans-serif; letter-spacing: .5px; box-shadow: 0 10px 25px rgba(68, 120, 255, .38); }

/* window behind */
.behind { height: 9px; flex: none; margin-top: -4px; border-radius: 0 0 8px 8px; background: linear-gradient(90deg, #c4c4c4 0, #9c9c9c 40px, #9c9c9c 1385px, #c8c8c8 1400px); font-size: 8px; line-height: 10px; color: #555; display: grid; grid-template-columns: 84px 90px 80px; padding-left: 30px; overflow: hidden; }

/* dock */
.dockrow { flex: 1; display: flex; justify-content: center; margin-top: -1px; z-index: 0; }
.dock { width: 1360px; height: 62px; padding: 0 4px; display: flex; background: #41617f; border-radius: 3px 3px 0 0; }
.app { width: 50.250px; height: 62px; display: flex; justify-content: center; padding-top: 9px; }
.app svg { overflow: visible; }
.app > svg { width: 40px; height: 40px; }
.app > .big { width: 42px; height: 42px; margin-top: -1px; }
.app > .wide { width: 44px; }
.app > .tall { width: 38px; height: 44px; margin-top: -2px; }
.run { background: radial-gradient(circle at 50% 58px, #05090d 1.800px, transparent 2.400px); }
.divider { width: 22.750px; height: 46px; margin-top: 8px; background: linear-gradient(#1d3a55, #1d3a55) center / 1px 100% no-repeat; }
.petals { isolation: isolate; }
.petals rect { mix-blend-mode: multiply; }
.cal-m { font: 8px Inter, sans-serif; fill: #fff; text-anchor: middle; }
.cal-d { font: 300 18px Inter, sans-serif; fill: #222; text-anchor: middle; }
.threed { font: 6px Inter, sans-serif; fill: #34495a; }
.tv { font: 500 16px Inter, sans-serif; fill: #fff; }
.office { font: 700 18px "Open Sans", sans-serif; fill: #fff; text-anchor: middle; }
.office.w { font-size: 16px; }
.xlsx { font: 7px Inter, sans-serif; fill: #555; text-anchor: middle; }
```
